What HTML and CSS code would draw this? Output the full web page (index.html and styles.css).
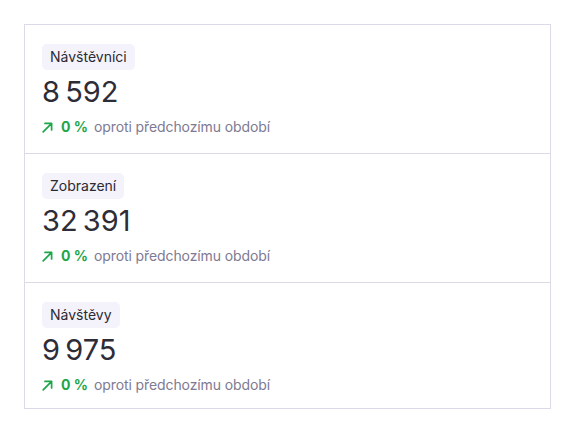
FILE: index.html
```html
<!DOCTYPE html>
<html lang="cs">
<head>
<meta charset="utf-8">
<link rel="stylesheet" href="styles.css">
</head>
<body>
<div class="card">
  <section class="stat">
    <span class="badge">Návštěvníci</span>
    <div class="value">8&#8239;592</div>
    <div class="change">
      <svg class="arrow" viewBox="0 0 11 11" width="11" height="11"><path d="M1.2 9.8L9.6 1.4M3 1.4H9.6V8" fill="none" stroke="currentColor" stroke-width="1.7" stroke-linecap="round" stroke-linejoin="round"/></svg>
      <span class="pct">0&nbsp;%</span>
      <span class="label">oproti předchozímu období</span>
    </div>
  </section>
  <section class="stat">
    <span class="badge">Zobrazení</span>
    <div class="value">32&#8239;391</div>
    <div class="change">
      <svg class="arrow" viewBox="0 0 11 11" width="11" height="11"><path d="M1.2 9.8L9.6 1.4M3 1.4H9.6V8" fill="none" stroke="currentColor" stroke-width="1.7" stroke-linecap="round" stroke-linejoin="round"/></svg>
      <span class="pct">0&nbsp;%</span>
      <span class="label">oproti předchozímu období</span>
    </div>
  </section>
  <section class="stat last">
    <span class="badge">Návštěvy</span>
    <div class="value">9&#8239;975</div>
    <div class="change">
      <svg class="arrow" viewBox="0 0 11 11" width="11" height="11"><path d="M1.2 9.8L9.6 1.4M3 1.4H9.6V8" fill="none" stroke="currentColor" stroke-width="1.7" stroke-linecap="round" stroke-linejoin="round"/></svg>
      <span class="pct">0&nbsp;%</span>
      <span class="label">oproti předchozímu období</span>
    </div>
  </section>
</div>
</body>
</html>
```
FILE: styles.css
```css
html, body {
  margin: 0;
  background: #ffffff;
}
body {
  padding: 24px;
  font-family: Inter, "Noto Sans", sans-serif;
  color: #27272f;
}
.card {
  width: 525px;
  border: 1px solid #dcdae6;
  display: flex;
  flex-direction: column;
}
.stat {
  height: 129px;
  box-sizing: border-box;
  padding: 19px 17px 0;
  border-bottom: 1px solid #dcdae6;
  display: flex;
  flex-direction: column;
  align-items: flex-start;
}
.stat.last {
  border-bottom: none;
  height: 125px;
}
.badge {
  display: inline-block;
  background: #f4f2fb;
  border-radius: 5px;
  padding: 0 8px;
  height: 26px;
  line-height: 26px;
  font-size: 14px;
  color: #2b2a33;
}
.value {
  margin-top: 5px;
  font-size: 29px;
  line-height: 34px;
  color: #2e2d37;
  letter-spacing: -0.7px;
}
.change {
  margin-top: 8px;
  display: flex;
  align-items: center;
  font-size: 14px;
  line-height: 20px;
}
.arrow {
  color: #1ea64a;
  margin-right: 8px;
}
.pct {
  color: #1ea64a;
  font-weight: 700;
  margin-right: 6px;
}
.label {
  color: #7d7a92;
  letter-spacing: -0.1px;
}
```
